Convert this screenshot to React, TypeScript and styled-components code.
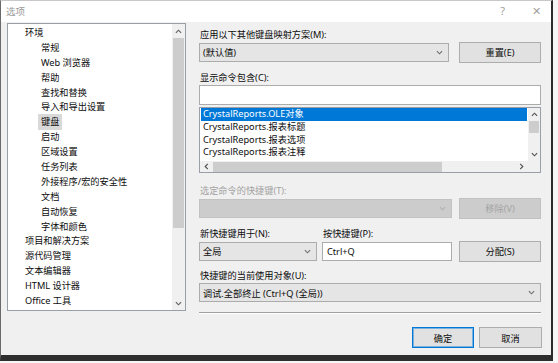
import React from 'react';
import styled, { createGlobalStyle, css } from 'styled-components';

const GlobalStyle = createGlobalStyle`
  html, body {
    margin: 0;
    padding: 0;
    background: #f6f6f6;
  }

  body {
    font-family: "Noto Sans", "Noto Sans CJK SC", sans-serif;
    font-size: 9.2px;
    color: #0c0c0c;
  }

  * {
    box-sizing: border-box;
  }
`;

const Screen = styled.div`
  width: 558px;
  height: 363px;
  overflow: hidden;
  background: #f6f6f6;
`;

const Window = styled.div`
  width: 553px;
  height: 361px;
  display: flex;
  flex-direction: column;
  background: #f0f0f0;
  border-left: 1px solid #6a6a6a;
  border-top: 1px solid #c8c8c8;
  border-right: 2px solid #2b2b2b;
  border-bottom: 6px solid #2e2e2e;
`;

const TitleBar = styled.div`
  height: 21px;
  display: flex;
  align-items: center;
  justify-content: space-between;
  padding: 0 10px 2px 5px;
  background: #ffffff;
  color: #9a9a9a;
  font-size: 9.5px;
`;

const TitleButtons = styled.div`
  display: flex;
  align-items: center;
  gap: 27px;

  span {
    font-size: 11px;
    color: #a0a0a0;
  }
`;

const Body = styled.div`
  display: flex;
  flex: 1;
  padding: 1px 0 0 6px;
`;

const TreePane = styled.div`
  width: 179px;
  height: 288px;
  display: flex;
  border: 1px solid #9a9ea6;
  background: #ffffff;
`;

const TreeList = styled.div`
  flex: 1;
  padding-top: 2px;
`;

const TreeItem = styled.div<{ $level: number }>`
  height: 14.9px;
  line-height: 14.9px;
  white-space: nowrap;
  padding-left: ${(p) => (p.$level === 0 ? 17 : 33)}px;
`;

const TreeText = styled.span<{ $selected?: boolean }>`
  ${(p) =>
    p.$selected &&
    css`
      background: #d9d9d9;
      padding: 1px 3px 2px;
      margin-left: -3px;
    `}
`;

const VScroll = styled.div<{ $width: number }>`
  width: ${(p) => p.$width}px;
  display: flex;
  flex-direction: column;
  align-items: center;
  background: #f0f0f0;
`;

const ArrowCell = styled.div<{ $size: number }>`
  width: 100%;
  height: ${(p) => p.$size}px;
  flex: none;
  display: flex;
  align-items: center;
  justify-content: center;
`;

const Thumb = styled.div<{ $size: number }>`
  width: calc(100% - 2px);
  height: ${(p) => p.$size}px;
  flex: none;
  background: #cdcdcd;
`;

const HThumb = styled.div<{ $size: number }>`
  width: ${(p) => p.$size}px;
  height: 10px;
  flex: none;
  background: #cdcdcd;
`;

const Spacer = styled.div`
  flex: 1;
`;

const Panel = styled.div`
  width: 342px;
  margin-left: 13px;
  padding-top: 4.5px;
  display: flex;
  flex-direction: column;
`;

const FieldLabel = styled.div<{ $top?: number; $disabled?: boolean }>`
  height: 13px;
  line-height: 13px;
  padding-left: 1px;
  white-space: nowrap;
  margin-top: ${(p) => p.$top ?? 0}px;
  color: ${(p) => (p.$disabled ? '#a3a3a3' : '#0c0c0c')};
`;

const Row = styled.div<{ $top: number; $gap: number }>`
  height: 21px;
  margin-top: ${(p) => p.$top}px;
  display: flex;
  align-items: center;
  gap: ${(p) => p.$gap}px;
`;

const Combo = styled.div<{ $width?: number; $disabled?: boolean }>`
  height: 19px;
  ${(p) => (p.$width ? `width: ${p.$width}px;` : 'flex: 1;')}
  flex-shrink: 0;
  display: flex;
  align-items: center;
  justify-content: space-between;
  padding: 0 5px 0 3px;
  white-space: nowrap;
  background: ${(p) => (p.$disabled ? '#cccccc' : '#e5e5e5')};
  border: 1px solid ${(p) => (p.$disabled ? '#c2c2c2' : '#acacac')};
  color: ${(p) => (p.$disabled ? '#a3a3a3' : '#0c0c0c')};
`;

const Button = styled.button<{ $width?: number; $primary?: boolean }>`
  width: ${(p) => p.$width ?? 82}px;
  height: 21px;
  padding: 0;
  font: inherit;
  color: #0c0c0c;
  background: #e1e1e1;
  border: 1px solid #adadad;

  &:disabled {
    color: #a3a3a3;
    background: #cccccc;
    border-color: #c2c2c2;
  }

  ${(p) =>
    p.$primary &&
    css`
      border-color: #0078d7;
      box-shadow: inset 0 0 0 1px rgba(0, 120, 215, 0.45);
    `}
`;

const TextBox = styled.div<{ $top: number; $width?: number }>`
  height: 19.5px;
  margin-top: ${(p) => p.$top}px;
  ${(p) => (p.$width ? `width: ${p.$width}px;` : '')}
  display: flex;
  align-items: center;
  padding-left: 4px;
  background: #ffffff;
  border: 1px solid #acacac;
`;

const ListBox = styled.div`
  height: 66px;
  margin-top: 2.5px;
  display: grid;
  grid-template-columns: 1fr 12px;
  grid-template-rows: 1fr 11px;
  background: #ffffff;
  border: 1px solid #9a9ea6;
`;

const ListItems = styled.div`
  padding: 0 1px;
  overflow: hidden;
`;

const ListRow = styled.div<{ $selected?: boolean }>`
  height: 12.8px;
  line-height: 12.8px;
  padding-left: 2px;
  white-space: nowrap;
  ${(p) =>
    p.$selected &&
    css`
      background: #0078d7;
      color: #ffffff;
    `}
`;

const HScroll = styled.div`
  display: flex;
  align-items: center;
  background: #f0f0f0;
`;

const Corner = styled.div`
  background: #f0f0f0;
`;

const ShortcutGrid = styled.div`
  margin-top: 8.5px;
  display: grid;
  grid-template-columns: 118px 135px 89px;
  grid-template-rows: 13px 21px;
  row-gap: 0.5px;
  align-items: center;
  justify-items: end;

  & > :nth-child(1),
  & > :nth-child(4) {
    justify-self: start;
  }
`;

const Separator = styled.div`
  margin-top: 9px;
  border-top: 1px solid #a0a0a0;
  border-bottom: 1px solid #ffffff;
`;

const Footer = styled.div`
  margin-top: 13px;
  margin-right: -1px;
  display: flex;
  justify-content: flex-end;
  gap: 5px;
`;

type Dir = 'up' | 'down' | 'left' | 'right';

const rotation: Record<Dir, number> = { down: 0, up: 180, left: 90, right: -90 };

const Chevron: React.FC<{ dir: Dir; color?: string; size?: number }> = ({
  dir,
  color = '#606060',
  size = 7,
}) => (
  <svg
    width={size}
    height={size}
    viewBox="0 0 8 8"
    style={{ transform: `rotate(${rotation[dir]}deg)` }}
  >
    <path d="M1 2.5 L4 5.5 L7 2.5" fill="none" stroke={color} strokeWidth="1.3" />
  </svg>
);

const treeItems: { label: string; level: number; selected?: boolean }[] = [
  { label: '环境', level: 0 },
  { label: '常规', level: 1 },
  { label: 'Web 浏览器', level: 1 },
  { label: '帮助', level: 1 },
  { label: '查找和替换', level: 1 },
  { label: '导入和导出设置', level: 1 },
  { label: '键盘', level: 1, selected: true },
  { label: '启动', level: 1 },
  { label: '区域设置', level: 1 },
  { label: '任务列表', level: 1 },
  { label: '外接程序/宏的安全性', level: 1 },
  { label: '文档', level: 1 },
  { label: '自动恢复', level: 1 },
  { label: '字体和颜色', level: 1 },
  { label: '项目和解决方案', level: 0 },
  { label: '源代码管理', level: 0 },
  { label: '文本编辑器', level: 0 },
  { label: 'HTML 设计器', level: 0 },
  { label: 'Office 工具', level: 0 },
];

const commands = [
  'CrystalReports.OLE对象',
  'CrystalReports.报表标题',
  'CrystalReports.报表选项',
  'CrystalReports.报表注释',
];

const App: React.FC = () => {
  return (
    <Screen>
      <GlobalStyle />
      <Window>
        <TitleBar>
          <div>选项</div>
          <TitleButtons>
            <span>?</span>
            <span>✕</span>
          </TitleButtons>
        </TitleBar>
        <Body>
          <TreePane>
            <TreeList>
              {treeItems.map((item) => (
                <TreeItem key={item.label} $level={item.level}>
                  <TreeText $selected={item.selected}>{item.label}</TreeText>
                </TreeItem>
              ))}
            </TreeList>
            <VScroll $width={13}>
              <ArrowCell $size={14}>
                <Chevron dir="up" />
              </ArrowCell>
              <Thumb $size={190} />
              <Spacer />
              <ArrowCell $size={14}>
                <Chevron dir="down" />
              </ArrowCell>
            </VScroll>
          </TreePane>

          <Panel>
            <FieldLabel>应用以下其他键盘映射方案(M):</FieldLabel>
            <Row $top={1} $gap={10}>
              <Combo>
                <span>(默认值)</span>
                <Chevron dir="down" color="#707070" />
              </Combo>
              <Button>重置(E)</Button>
            </Row>

            <FieldLabel $top={8}>显示命令包含(C):</FieldLabel>
            <TextBox $top={1.5} />

            <ListBox>
              <ListItems>
                {commands.map((c, i) => (
                  <ListRow key={c} $selected={i === 0}>
                    {c}
                  </ListRow>
                ))}
              </ListItems>
              <VScroll $width={12}>
                <ArrowCell $size={13}>
                  <Chevron dir="up" color="#505050" />
                </ArrowCell>
                <Thumb $size={12} />
                <Spacer />
                <ArrowCell $size={13}>
                  <Chevron dir="down" color="#505050" />
                </ArrowCell>
              </VScroll>
              <HScroll>
                <ArrowCell $size={11} style={{ width: 13 }}>
                  <Chevron dir="left" color="#505050" />
                </ArrowCell>
                <HThumb $size={229} />
                <Spacer />
                <ArrowCell $size={11} style={{ width: 13 }}>
                  <Chevron dir="right" color="#505050" />
                </ArrowCell>
              </HScroll>
              <Corner />
            </ListBox>

            <FieldLabel $top={10.8} $disabled>
              选定命令的快捷键(T):
            </FieldLabel>
            <Row $top={1.2} $gap={7}>
              <Combo $disabled>
                <span />
                <Chevron dir="down" color="#b0b0b0" />
              </Combo>
              <Button disabled>移除(V)</Button>
            </Row>

            <ShortcutGrid>
              <FieldLabel>新快捷键用于(N):</FieldLabel>
              <FieldLabel style={{ width: 130 }}>按快捷键(P):</FieldLabel>
              <div />
              <Combo $width={118}>
                <span>全局</span>
                <Chevron dir="down" color="#707070" />
              </Combo>
              <TextBox $top={0} $width={130}>
                Ctrl+Q
              </TextBox>
              <Button>分配(S)</Button>
            </ShortcutGrid>

            <FieldLabel $top={7.5}>快捷键的当前使用对象(U):</FieldLabel>
            <Row $top={0} $gap={0}>
              <Combo>
                <span>调试.全部终止 (Ctrl+Q (全局))</span>
                <Chevron dir="down" color="#707070" />
              </Combo>
            </Row>

            <Separator />

            <Footer>
              <Button $width={62} $primary>
                确定
              </Button>
              <Button $width={63}>取消</Button>
            </Footer>
          </Panel>
        </Body>
      </Window>
    </Screen>
  );
};

export default App;
